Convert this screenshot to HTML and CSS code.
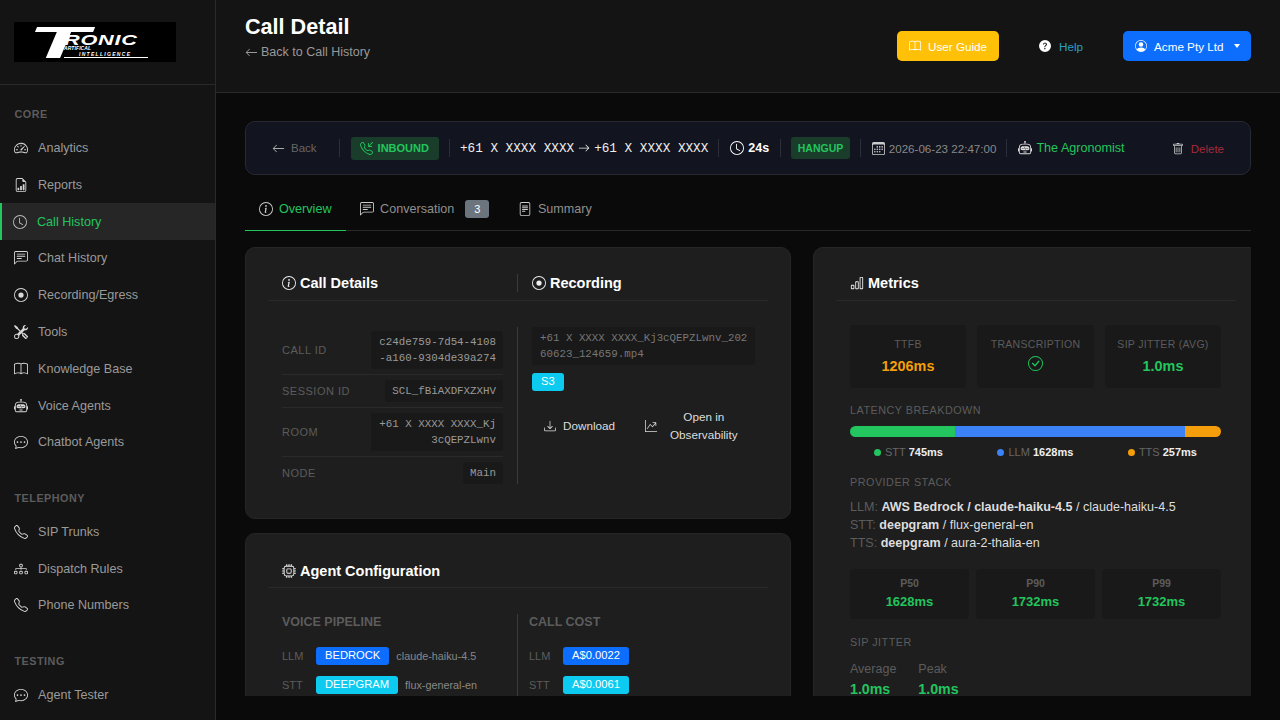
FILE: index.html
```html
<!DOCTYPE html>
<html lang="en">
<head>
    <meta charset="UTF-8">
    <meta name="viewport" content="width=device-width, initial-scale=1.0">
    <title>Call Detail</title>
    <link rel="stylesheet" href="styles.css">
</head>
<body>

    <!-- Icon sprite -->
    <svg class="sprite" xmlns="http://www.w3.org/2000/svg">
        <symbol id="i-speedometer" viewBox="0 0 16 16"><path d="M8 4a.5.5 0 0 1 .5.5V6a.5.5 0 0 1-1 0V4.5A.5.5 0 0 1 8 4zM3.732 5.732a.5.5 0 0 1 .707 0l.915.914a.5.5 0 1 1-.708.708l-.914-.915a.5.5 0 0 1 0-.707zM2 10a.5.5 0 0 1 .5-.5h1.586a.5.5 0 0 1 0 1H2.5A.5.5 0 0 1 2 10zm9.5 0a.5.5 0 0 1 .5-.5h1.5a.5.5 0 0 1 0 1H12a.5.5 0 0 1-.5-.5zm.754-4.246a.389.389 0 0 0-.527-.02L7.547 9.31a.91.91 0 1 0 1.302 1.258l3.434-4.297a.389.389 0 0 0-.029-.518z"/><path fill-rule="evenodd" d="M0 10a8 8 0 1 1 15.547 2.661c-.442 1.253-1.845 1.602-2.932 1.25C11.309 13.488 9.475 13 8 13c-1.474 0-3.31.488-4.615.911-1.087.352-2.49.003-2.932-1.25A7.988 7.988 0 0 1 0 10zm8-7a7 7 0 0 0-6.603 9.329c.203.575.923.876 1.68.63C4.397 12.533 6.358 12 8 12s3.604.532 4.923.96c.757.245 1.477-.056 1.68-.631A7 7 0 0 0 8 3z"/></symbol>
        <symbol id="i-report" viewBox="0 0 16 16"><path d="M10 13.5a.5.5 0 0 0 .5.5h1a.5.5 0 0 0 .5-.5v-6a.5.5 0 0 0-.5-.5h-1a.5.5 0 0 0-.5.5v6zm-2.5.5a.5.5 0 0 1-.5-.5v-4a.5.5 0 0 1 .5-.5h1a.5.5 0 0 1 .5.5v4a.5.5 0 0 1-.5.5h-1zm-3 0a.5.5 0 0 1-.5-.5v-2a.5.5 0 0 1 .5-.5h1a.5.5 0 0 1 .5.5v2a.5.5 0 0 1-.5.5h-1z"/><path d="M14 14V4.5L9.5 0H4a2 2 0 0 0-2 2v12a2 2 0 0 0 2 2h8a2 2 0 0 0 2-2zM9.5 3A1.5 1.5 0 0 0 11 4.5h2V14a1 1 0 0 1-1 1H4a1 1 0 0 1-1-1V2a1 1 0 0 1 1-1h5.5v2z"/></symbol>
        <symbol id="i-clock" viewBox="0 0 16 16"><path d="M8 3.5a.5.5 0 0 0-1 0V9a.5.5 0 0 0 .252.434l3.5 2a.5.5 0 0 0 .496-.868L8 8.71V3.5z"/><path d="M8 16A8 8 0 1 0 8 0a8 8 0 0 0 0 16zm7-8A7 7 0 1 1 1 8a7 7 0 0 1 14 0z"/></symbol>
        <symbol id="i-chat-text" viewBox="0 0 16 16"><path d="M14 1a1 1 0 0 1 1 1v8a1 1 0 0 1-1 1H4.414A2 2 0 0 0 3 11.586l-2 2V2a1 1 0 0 1 1-1h12zM2 0a2 2 0 0 0-2 2v12.793a.5.5 0 0 0 .854.353l2.853-2.853A1 1 0 0 1 4.414 12H14a2 2 0 0 0 2-2V2a2 2 0 0 0-2-2H2z"/><path d="M3 3.5a.5.5 0 0 1 .5-.5h9a.5.5 0 0 1 0 1h-9a.5.5 0 0 1-.5-.5zM3 6a.5.5 0 0 1 .5-.5h9a.5.5 0 0 1 0 1h-9A.5.5 0 0 1 3 6zm0 2.5a.5.5 0 0 1 .5-.5h5a.5.5 0 0 1 0 1h-5a.5.5 0 0 1-.5-.5z"/></symbol>
        <symbol id="i-record" viewBox="0 0 16 16"><path d="M8 15A7 7 0 1 1 8 1a7 7 0 0 1 0 14zm0 1A8 8 0 1 0 8 0a8 8 0 0 0 0 16z"/><path d="M11 8a3 3 0 1 1-6 0 3 3 0 0 1 6 0z"/></symbol>
        <symbol id="i-tools" viewBox="0 0 16 16"><path d="M1 0 0 1l2.2 3.081a1 1 0 0 0 .815.419h.07a1 1 0 0 1 .708.293l2.675 2.675-2.617 2.654A3.003 3.003 0 0 0 0 13a3 3 0 1 0 5.878-.851l2.654-2.617.968.968-.305.914a1 1 0 0 0 .242 1.023l3.27 3.27a.997.997 0 0 0 1.414 0l1.586-1.586a.997.997 0 0 0 0-1.414l-3.27-3.27a1 1 0 0 0-1.023-.242L10.5 9.5l-.96-.96 2.68-2.643A3.005 3.005 0 0 0 16 3c0-.269-.035-.53-.102-.777l-2.14 2.141L12 4l-.364-1.757L13.777.102a3 3 0 0 0-3.675 3.68L7.462 6.46 4.793 3.793a1 1 0 0 1-.293-.707v-.071a1 1 0 0 0-.419-.814L1 0Zm9.646 10.646a.5.5 0 0 1 .708 0l2.914 2.915a.5.5 0 0 1-.707.707l-2.915-2.914a.5.5 0 0 1 0-.708ZM3 11l.471.242.529.026.287.445.445.287.026.529L5 13l-.242.471-.026.529-.445.287-.287.445-.529.026L3 15l-.471-.242L2 14.732l-.287-.445L1.268 14l-.026-.529L1 13l.242-.471.026-.529.445-.287.287-.445.529-.026L3 11Z"/></symbol>
        <symbol id="i-book" viewBox="0 0 16 16"><path d="M1 2.828c.885-.37 2.154-.769 3.388-.893 1.33-.134 2.458.063 3.112.752v9.746c-.935-.53-2.12-.603-3.213-.493-1.18.12-2.37.461-3.287.811V2.828zm7.5-.141c.654-.689 1.782-.886 3.112-.752 1.234.124 2.503.523 3.388.893v9.923c-.918-.35-2.107-.692-3.287-.81-1.094-.111-2.278-.039-3.213.492V2.687zM8 1.783C7.015.936 5.587.81 4.287.94c-1.514.153-3.042.672-3.994 1.105A.5.5 0 0 0 0 2.5v11a.5.5 0 0 0 .707.455c.882-.4 2.303-.881 3.68-1.02 1.409-.142 2.59.087 3.223.877a.5.5 0 0 0 .78 0c.633-.79 1.814-1.019 3.222-.877 1.378.139 2.8.62 3.681 1.02A.5.5 0 0 0 16 13.5v-11a.5.5 0 0 0-.293-.455c-.952-.433-2.48-.952-3.994-1.105C10.413.809 8.985.936 8 1.783z"/></symbol>
        <symbol id="i-robot" viewBox="0 0 16 16"><path d="M6 12.5a.5.5 0 0 1 .5-.5h3a.5.5 0 0 1 0 1h-3a.5.5 0 0 1-.5-.5ZM3 8.062C3 6.76 4.235 5.765 5.53 5.886a26.58 26.58 0 0 0 4.94 0C11.765 5.765 13 6.76 13 8.062v1.157a.933.933 0 0 1-.765.935c-.845.147-2.34.346-4.235.346-1.895 0-3.39-.2-4.235-.346A.933.933 0 0 1 3 9.219V8.062Zm4.542-.827a.25.25 0 0 0-.217.068l-.92.9a24.767 24.767 0 0 1-1.871-.183.25.25 0 0 0-.068.495c.55.076 1.232.149 2.02.193a.25.25 0 0 0 .189-.071l.754-.736.847 1.71a.25.25 0 0 0 .404.062l.932-.97a25.286 25.286 0 0 0 1.922-.188.25.25 0 0 0-.068-.495c-.538.074-1.207.145-1.98.189a.25.25 0 0 0-.166.076l-.754.785-.842-1.7a.25.25 0 0 0-.182-.135Z"/><path d="M8.5 1.866a1 1 0 1 0-1 0V3h-2A4.5 4.5 0 0 0 1 7.5V8a1 1 0 0 0-1 1v2a1 1 0 0 0 1 1v1a2 2 0 0 0 2 2h10a2 2 0 0 0 2-2v-1a1 1 0 0 0 1-1V9a1 1 0 0 0-1-1v-.5A4.5 4.5 0 0 0 10.5 3h-2V1.866ZM14 7.5V13a1 1 0 0 1-1 1H3a1 1 0 0 1-1-1V7.5A3.5 3.5 0 0 1 5.5 4h5A3.5 3.5 0 0 1 14 7.5Z"/></symbol>
        <symbol id="i-chat-dots" viewBox="0 0 16 16"><path d="M5 8a1 1 0 1 1-2 0 1 1 0 0 1 2 0zm4 0a1 1 0 1 1-2 0 1 1 0 0 1 2 0zm3 1a1 1 0 1 0 0-2 1 1 0 0 0 0 2z"/><path d="M2.165 15.803l.02-.004c1.83-.363 2.948-.842 3.468-1.105A9.06 9.06 0 0 0 8 15c4.418 0 8-3.134 8-7s-3.582-7-8-7-8 3.134-8 7c0 1.76.743 3.37 1.97 4.6a10.437 10.437 0 0 1-.524 2.318l-.003.011a10.722 10.722 0 0 1-.244.637c-.079.186.074.394.273.362a21.673 21.673 0 0 0 .693-.125zm.8-3.108a1 1 0 0 0-.287-.801C1.618 10.83 1 9.468 1 8c0-3.192 3.004-6 7-6s7 2.808 7 6c0 3.193-3.004 6-7 6a8.06 8.06 0 0 1-2.088-.272 1 1 0 0 0-.711.074c-.387.196-1.24.57-2.634.893a10.97 10.97 0 0 0 .398-2z"/></symbol>
        <symbol id="i-phone" viewBox="0 0 16 16"><path d="M3.654 1.328a.678.678 0 0 0-1.015-.063L1.605 2.3c-.483.484-.661 1.169-.45 1.77a17.568 17.568 0 0 0 4.168 6.608 17.569 17.569 0 0 0 6.608 4.168c.601.211 1.286.033 1.77-.45l1.034-1.034a.678.678 0 0 0-.063-1.015l-2.307-1.794a.678.678 0 0 0-.58-.122l-2.19.547a1.745 1.745 0 0 1-1.657-.459L5.482 8.062a1.745 1.745 0 0 1-.46-1.657l.548-2.19a.678.678 0 0 0-.122-.58L3.654 1.328zM1.884.511a1.745 1.745 0 0 1 2.612.163L6.29 2.98c.329.423.445.974.315 1.494l-.547 2.19a.678.678 0 0 0 .178.643l2.457 2.457a.678.678 0 0 0 .644.178l2.189-.547a1.745 1.745 0 0 1 1.494.315l2.306 1.794c.829.645.905 1.87.163 2.611l-1.034 1.034c-.74.74-1.846 1.065-2.877.702a18.634 18.634 0 0 1-7.01-4.42 18.634 18.634 0 0 1-4.42-7.009c-.362-1.03-.037-2.137.703-2.877L1.885.511z"/></symbol>
        <symbol id="i-inbound" viewBox="0 0 16 16"><path d="M15.854.146a.5.5 0 0 1 0 .708L11.707 5H14.5a.5.5 0 0 1 0 1h-4a.5.5 0 0 1-.5-.5v-4a.5.5 0 0 1 1 0v2.793L15.146.146a.5.5 0 0 1 .708 0z"/><path d="M3.654 1.328a.678.678 0 0 0-1.015-.063L1.605 2.3c-.483.484-.661 1.169-.45 1.77a17.568 17.568 0 0 0 4.168 6.608 17.569 17.569 0 0 0 6.608 4.168c.601.211 1.286.033 1.77-.45l1.034-1.034a.678.678 0 0 0-.063-1.015l-2.307-1.794a.678.678 0 0 0-.58-.122l-2.19.547a1.745 1.745 0 0 1-1.657-.459L5.482 8.062a1.745 1.745 0 0 1-.46-1.657l.548-2.19a.678.678 0 0 0-.122-.58L3.654 1.328zM1.884.511a1.745 1.745 0 0 1 2.612.163L6.29 2.98c.329.423.445.974.315 1.494l-.547 2.19a.678.678 0 0 0 .178.643l2.457 2.457a.678.678 0 0 0 .644.178l2.189-.547a1.745 1.745 0 0 1 1.494.315l2.306 1.794c.829.645.905 1.87.163 2.611l-1.034 1.034c-.74.74-1.846 1.065-2.877.702a18.634 18.634 0 0 1-7.01-4.42 18.634 18.634 0 0 1-4.42-7.009c-.362-1.03-.037-2.137.703-2.877L1.885.511z"/></symbol>
        <symbol id="i-diagram" viewBox="0 0 16 16"><path fill-rule="evenodd" d="M6 3.5A1.5 1.5 0 0 1 7.5 2h1A1.5 1.5 0 0 1 10 3.5v1A1.5 1.5 0 0 1 8.5 6v1H14a.5.5 0 0 1 .5.5v1a.5.5 0 0 1-1 0V8h-5v.5a.5.5 0 0 1-1 0V8h-5v.5a.5.5 0 0 1-1 0v-1A.5.5 0 0 1 2 7h5.5V6A1.5 1.5 0 0 1 6 4.5v-1zM8.5 5a.5.5 0 0 0 .5-.5v-1a.5.5 0 0 0-.5-.5h-1a.5.5 0 0 0-.5.5v1a.5.5 0 0 0 .5.5h1zM0 11.5A1.5 1.5 0 0 1 1.5 10h1A1.5 1.5 0 0 1 4 11.5v1A1.5 1.5 0 0 1 2.5 14h-1A1.5 1.5 0 0 1 0 12.5v-1zm1.5-.5a.5.5 0 0 0-.5.5v1a.5.5 0 0 0 .5.5h1a.5.5 0 0 0 .5-.5v-1a.5.5 0 0 0-.5-.5h-1zm4.5.5A1.5 1.5 0 0 1 7.5 10h1a1.5 1.5 0 0 1 1.5 1.5v1A1.5 1.5 0 0 1 8.5 14h-1A1.5 1.5 0 0 1 6 12.5v-1zm1.5-.5a.5.5 0 0 0-.5.5v1a.5.5 0 0 0 .5.5h1a.5.5 0 0 0 .5-.5v-1a.5.5 0 0 0-.5-.5h-1zm4.5.5a1.5 1.5 0 0 1 1.5-1.5h1a1.5 1.5 0 0 1 1.5 1.5v1a1.5 1.5 0 0 1-1.5 1.5h-1a1.5 1.5 0 0 1-1.5-1.5v-1zm1.5-.5a.5.5 0 0 0-.5.5v1a.5.5 0 0 0 .5.5h1a.5.5 0 0 0 .5-.5v-1a.5.5 0 0 0-.5-.5h-1z"/></symbol>
        <symbol id="i-arrow-left" viewBox="0 0 16 16"><path fill-rule="evenodd" d="M15 8a.5.5 0 0 0-.5-.5H2.707l3.147-3.146a.5.5 0 1 0-.708-.708l-4 4a.5.5 0 0 0 0 .708l4 4a.5.5 0 0 0 .708-.708L2.707 8.5H14.5A.5.5 0 0 0 15 8z"/></symbol>
        <symbol id="i-arrow-right" viewBox="0 0 16 16"><path fill-rule="evenodd" d="M1 8a.5.5 0 0 1 .5-.5h11.793l-3.147-3.146a.5.5 0 0 1 .708-.708l4 4a.5.5 0 0 1 0 .708l-4 4a.5.5 0 0 1-.708-.708L13.293 8.5H1.5A.5.5 0 0 1 1 8z"/></symbol>
        <symbol id="i-info" viewBox="0 0 16 16"><path d="M8 15A7 7 0 1 1 8 1a7 7 0 0 1 0 14zm0 1A8 8 0 1 0 8 0a8 8 0 0 0 0 16z"/><path d="m8.93 6.588-2.29.287-.082.38.45.083c.294.07.352.176.288.469l-.738 3.468c-.194.897.105 1.319.808 1.319.545 0 1.178-.252 1.465-.598l.088-.416c-.2.176-.492.246-.686.246-.275 0-.375-.193-.304-.533L8.93 6.588zM9 4.5a1 1 0 1 1-2 0 1 1 0 0 1 2 0z"/></symbol>
        <symbol id="i-question" viewBox="0 0 16 16"><path d="M16 8A8 8 0 1 1 0 8a8 8 0 0 1 16 0zM5.496 6.033h.825c.138 0 .248-.113.266-.25.09-.656.54-1.134 1.342-1.134.686 0 1.314.343 1.314 1.168 0 .635-.374.927-.965 1.371-.673.489-1.206 1.06-1.168 1.987l.003.217a.25.25 0 0 0 .25.246h.811a.25.25 0 0 0 .25-.25v-.105c0-.718.273-.927 1.01-1.486.609-.463 1.244-.977 1.244-2.056 0-1.511-1.276-2.241-2.673-2.241-1.267 0-2.655.59-2.75 2.286a.237.237 0 0 0 .241.247zm2.325 6.443c.61 0 1.029-.394 1.029-.927 0-.552-.42-.94-1.029-.94-.584 0-1.009.388-1.009.94 0 .533.425.927 1.01.927z"/></symbol>
        <symbol id="i-person" viewBox="0 0 16 16"><path d="M11 6a3 3 0 1 1-6 0 3 3 0 0 1 6 0z"/><path fill-rule="evenodd" d="M0 8a8 8 0 1 1 16 0A8 8 0 0 1 0 8zm8-7a7 7 0 0 0-5.468 11.37C3.242 11.226 4.805 10 8 10s4.757 1.225 5.468 2.37A7 7 0 0 0 8 1z"/></symbol>
        <symbol id="i-calendar" viewBox="0 0 16 16"><path d="M14 0H2a2 2 0 0 0-2 2v12a2 2 0 0 0 2 2h12a2 2 0 0 0 2-2V2a2 2 0 0 0-2-2zM1 3.857C1 3.384 1.448 3 2 3h12c.552 0 1 .384 1 .857v10.286c0 .473-.448.857-1 .857H2c-.552 0-1-.384-1-.857V3.857z"/><path d="M6.5 7a1 1 0 1 0 0-2 1 1 0 0 0 0 2zm3 0a1 1 0 1 0 0-2 1 1 0 0 0 0 2zm3 0a1 1 0 1 0 0-2 1 1 0 0 0 0 2zm-9 3a1 1 0 1 0 0-2 1 1 0 0 0 0 2zm3 0a1 1 0 1 0 0-2 1 1 0 0 0 0 2zm3 0a1 1 0 1 0 0-2 1 1 0 0 0 0 2zm3 0a1 1 0 1 0 0-2 1 1 0 0 0 0 2zm-9 3a1 1 0 1 0 0-2 1 1 0 0 0 0 2zm3 0a1 1 0 1 0 0-2 1 1 0 0 0 0 2zm3 0a1 1 0 1 0 0-2 1 1 0 0 0 0 2z"/></symbol>
        <symbol id="i-trash" viewBox="0 0 16 16"><path d="M5.5 5.5A.5.5 0 0 1 6 6v6a.5.5 0 0 1-1 0V6a.5.5 0 0 1 .5-.5zm2.5 0a.5.5 0 0 1 .5.5v6a.5.5 0 0 1-1 0V6a.5.5 0 0 1 .5-.5zm3 .5a.5.5 0 0 0-1 0v6a.5.5 0 0 0 1 0V6z"/><path fill-rule="evenodd" d="M14.5 3a1 1 0 0 1-1 1H13v9a2 2 0 0 1-2 2H5a2 2 0 0 1-2-2V4h-.5a1 1 0 0 1-1-1V2a1 1 0 0 1 1-1H6a1 1 0 0 1 1-1h2a1 1 0 0 1 1 1h3.5a1 1 0 0 1 1 1v1zM4.118 4 4 4.059V13a1 1 0 0 0 1 1h6a1 1 0 0 0 1-1V4.059L11.882 4H4.118zM2.5 3V2h11v1h-11z"/></symbol>
        <symbol id="i-file-text" viewBox="0 0 16 16"><path d="M5 4a.5.5 0 0 0 0 1h6a.5.5 0 0 0 0-1H5zm-.5 2.5A.5.5 0 0 1 5 6h6a.5.5 0 0 1 0 1H5a.5.5 0 0 1-.5-.5zM5 8a.5.5 0 0 0 0 1h6a.5.5 0 0 0 0-1H5zm0 2a.5.5 0 0 0 0 1h3a.5.5 0 0 0 0-1H5z"/><path d="M2 2a2 2 0 0 1 2-2h8a2 2 0 0 1 2 2v12a2 2 0 0 1-2 2H4a2 2 0 0 1-2-2V2zm10-1H4a1 1 0 0 0-1 1v12a1 1 0 0 0 1 1h8a1 1 0 0 0 1-1V2a1 1 0 0 0-1-1z"/></symbol>
        <symbol id="i-download" viewBox="0 0 16 16"><path d="M.5 9.9a.5.5 0 0 1 .5.5v2.5a1 1 0 0 0 1 1h12a1 1 0 0 0 1-1v-2.5a.5.5 0 0 1 1 0v2.5a2 2 0 0 1-2 2H2a2 2 0 0 1-2-2v-2.5a.5.5 0 0 1 .5-.5z"/><path d="M7.646 11.854a.5.5 0 0 0 .708 0l3-3a.5.5 0 0 0-.708-.708L8.5 10.293V1.5a.5.5 0 0 0-1 0v8.793L5.354 8.146a.5.5 0 1 0-.708.708l3 3z"/></symbol>
        <symbol id="i-graph" viewBox="0 0 16 16"><path fill-rule="evenodd" d="M0 0h1v15h15v1H0V0Zm10 3.5a.5.5 0 0 1 .5-.5h4a.5.5 0 0 1 .5.5v4a.5.5 0 0 1-1 0V4.9l-3.613 4.417a.5.5 0 0 1-.74.037L7.06 6.767l-3.656 5.027a.5.5 0 0 1-.808-.588l4-5.5a.5.5 0 0 1 .758-.06l2.609 2.61L13.445 4H10.5a.5.5 0 0 1-.5-.5Z"/></symbol>
        <symbol id="i-bars" viewBox="0 0 16 16"><path d="M4 11H2v3h2v-3zm5-4H7v7h2V7zm5-5v12h-2V2h2zm-2-1a1 1 0 0 0-1 1v12a1 1 0 0 0 1 1h2a1 1 0 0 0 1-1V2a1 1 0 0 0-1-1h-2zM6 7a1 1 0 0 1 1-1h2a1 1 0 0 1 1 1v7a1 1 0 0 1-1 1H7a1 1 0 0 1-1-1V7zm-5 4a1 1 0 0 1 1-1h2a1 1 0 0 1 1 1v3a1 1 0 0 1-1 1H2a1 1 0 0 1-1-1v-3z"/></symbol>
        <symbol id="i-check" viewBox="0 0 16 16"><path d="M8 15A7 7 0 1 1 8 1a7 7 0 0 1 0 14zm0 1A8 8 0 1 0 8 0a8 8 0 0 0 0 16z"/><path d="M10.97 4.97a.235.235 0 0 0-.02.022L7.477 9.417 5.384 7.323a.75.75 0 0 0-1.06 1.06L6.97 11.03a.75.75 0 0 0 1.079-.02l3.992-4.99a.75.75 0 0 0-1.071-1.05z"/></symbol>
        <symbol id="i-cpu" viewBox="0 0 16 16"><path d="M5 0a.5.5 0 0 1 .5.5V2h1V.5a.5.5 0 0 1 1 0V2h1V.5a.5.5 0 0 1 1 0V2h1V.5a.5.5 0 0 1 1 0V2A2.5 2.5 0 0 1 14 4.5h1.5a.5.5 0 0 1 0 1H14v1h1.5a.5.5 0 0 1 0 1H14v1h1.5a.5.5 0 0 1 0 1H14v1h1.5a.5.5 0 0 1 0 1H14a2.5 2.5 0 0 1-2.5 2.5v1.5a.5.5 0 0 1-1 0V14h-1v1.5a.5.5 0 0 1-1 0V14h-1v1.5a.5.5 0 0 1-1 0V14h-1v1.5a.5.5 0 0 1-1 0V14A2.5 2.5 0 0 1 2 11.5H.5a.5.5 0 0 1 0-1H2v-1H.5a.5.5 0 0 1 0-1H2v-1H.5a.5.5 0 0 1 0-1H2v-1H.5a.5.5 0 0 1 0-1H2A2.5 2.5 0 0 1 4.5 2V.5A.5.5 0 0 1 5 0zm-.5 3A1.5 1.5 0 0 0 3 4.5v7A1.5 1.5 0 0 0 4.5 13h7a1.5 1.5 0 0 0 1.5-1.5v-7A1.5 1.5 0 0 0 11.5 3h-7zM5 6.5A1.5 1.5 0 0 1 6.5 5h3A1.5 1.5 0 0 1 11 6.5v3A1.5 1.5 0 0 1 9.5 11h-3A1.5 1.5 0 0 1 5 9.5v-3zM6.5 6a.5.5 0 0 0-.5.5v3a.5.5 0 0 0 .5.5h3a.5.5 0 0 0 .5-.5v-3a.5.5 0 0 0-.5-.5h-3z"/></symbol>
    </svg>

    <div class="app">

        <!-- Sidebar -->
        <aside class="sidebar">
            <div class="brand">
                <div class="logo">
                    <span class="logo-t">T</span>
                    <div class="logo-words">
                        <span class="logo-name">RONIC</span>
                        <span class="logo-sub">ARTIFICAL</span>
                        <span class="logo-sub logo-sub-2">INTELLIGENCE</span>
                    </div>
                </div>
            </div>
            <nav class="nav">
                <div class="nav-label">CORE</div>
                <a class="nav-item"><svg class="icon"><use href="#i-speedometer"/></svg>Analytics</a>
                <a class="nav-item"><svg class="icon"><use href="#i-report"/></svg>Reports</a>
                <a class="nav-item active"><svg class="icon"><use href="#i-clock"/></svg>Call History</a>
                <a class="nav-item"><svg class="icon"><use href="#i-chat-text"/></svg>Chat History</a>
                <a class="nav-item"><svg class="icon"><use href="#i-record"/></svg>Recording/Egress</a>
                <a class="nav-item"><svg class="icon"><use href="#i-tools"/></svg>Tools</a>
                <a class="nav-item"><svg class="icon"><use href="#i-book"/></svg>Knowledge Base</a>
                <a class="nav-item"><svg class="icon"><use href="#i-robot"/></svg>Voice Agents</a>
                <a class="nav-item"><svg class="icon"><use href="#i-chat-dots"/></svg>Chatbot Agents</a>

                <div class="nav-label">TELEPHONY</div>
                <a class="nav-item"><svg class="icon"><use href="#i-phone"/></svg>SIP Trunks</a>
                <a class="nav-item"><svg class="icon"><use href="#i-diagram"/></svg>Dispatch Rules</a>
                <a class="nav-item"><svg class="icon"><use href="#i-phone"/></svg>Phone Numbers</a>

                <div class="nav-label">TESTING</div>
                <a class="nav-item"><svg class="icon"><use href="#i-chat-dots"/></svg>Agent Tester</a>
            </nav>
        </aside>

        <div class="main">
            <!-- Top bar -->
            <header class="topbar">
                <div class="topbar-title">
                    <h1>Call Detail</h1>
                    <a class="back-link"><svg class="icon"><use href="#i-arrow-left"/></svg>Back to Call History</a>
                </div>
                <div class="topbar-actions">
                    <button class="btn btn-guide"><svg class="icon"><use href="#i-book"/></svg>User Guide</button>
                    <button class="btn btn-help"><svg class="icon"><use href="#i-question"/></svg>Help</button>
                    <button class="btn btn-account"><svg class="icon"><use href="#i-person"/></svg>Acme Pty Ltd<span class="caret"></span></button>
                </div>
            </header>

            <div class="content">
                <!-- Call summary bar -->
                <div class="callbar">
                    <a class="callbar-back"><svg class="icon"><use href="#i-arrow-left"/></svg>Back</a>
                    <span class="sep"></span>
                    <span class="tag tag-inbound"><svg class="icon"><use href="#i-inbound"/></svg>INBOUND</span>
                    <span class="sep"></span>
                    <span class="numbers"><span>+61 X XXXX XXXX</span><svg class="icon"><use href="#i-arrow-right"/></svg><span>+61 X XXXX XXXX</span></span>
                    <span class="sep"></span>
                    <span class="duration"><svg class="icon"><use href="#i-clock"/></svg>24s</span>
                    <span class="sep"></span>
                    <span class="tag tag-hangup">HANGUP</span>
                    <span class="sep"></span>
                    <span class="started"><svg class="icon"><use href="#i-calendar"/></svg>2026-06-23 22:47:00</span>
                    <span class="sep"></span>
                    <span class="agent"><svg class="icon"><use href="#i-robot"/></svg>The Agronomist</span>
                    <a class="delete"><svg class="icon"><use href="#i-trash"/></svg>Delete</a>
                </div>

                <!-- Tabs -->
                <div class="tabs">
                    <a class="tab active"><svg class="icon"><use href="#i-info"/></svg>Overview</a>
                    <a class="tab"><svg class="icon"><use href="#i-chat-text"/></svg>Conversation<span class="tab-count">3</span></a>
                    <a class="tab"><svg class="icon"><use href="#i-file-text"/></svg>Summary</a>
                </div>

                <div class="columns">
                    <div class="column">
                        <!-- Call details + recording -->
                        <section class="card">
                            <div class="card-head split">
                                <h2 class="card-title"><svg class="icon"><use href="#i-info"/></svg>Call Details</h2>
                                <h2 class="card-title"><svg class="icon"><use href="#i-record"/></svg>Recording</h2>
                            </div>
                            <div class="detail-body">
                                <div class="detail-list">
                                    <div class="detail-row">
                                        <span class="detail-key">CALL ID</span>
                                        <code class="detail-val">c24de759-7d54-4108-a160-9304de39a274</code>
                                    </div>
                                    <div class="detail-row">
                                        <span class="detail-key">SESSION ID</span>
                                        <code class="detail-val">SCL_fBiAXDFXZXHV</code>
                                    </div>
                                    <div class="detail-row">
                                        <span class="detail-key">ROOM</span>
                                        <code class="detail-val">+61 X XXXX XXXX_Kj3cQEPZLwnv</code>
                                    </div>
                                    <div class="detail-row">
                                        <span class="detail-key">NODE</span>
                                        <code class="detail-val">Main</code>
                                    </div>
                                </div>
                                <div class="recording">
                                    <code class="file-name">+61 X XXXX XXXX_Kj3cQEPZLwnv_20260623_124659.mp4</code>
                                    <span class="badge badge-cyan badge-s3">S3</span>
                                    <div class="recording-actions">
                                        <a class="rec-action rec-download"><svg class="icon"><use href="#i-download"/></svg>Download</a>
                                        <a class="rec-action rec-observe"><svg class="icon"><use href="#i-graph"/></svg><span>Open in<br>Observability</span></a>
                                    </div>
                                </div>
                            </div>
                        </section>

                        <!-- Agent configuration -->
                        <section class="card">
                            <div class="card-head head-tall">
                                <h2 class="card-title"><svg class="icon"><use href="#i-cpu"/></svg>Agent Configuration</h2>
                            </div>
                            <div class="config-body">
                                <div class="config-col">
                                    <h3 class="config-title">VOICE PIPELINE</h3>
                                    <div class="config-row"><span class="config-key">LLM</span><span class="badge badge-blue">BEDROCK</span><span class="config-model">claude-haiku-4.5</span></div>
                                    <div class="config-row"><span class="config-key">STT</span><span class="badge badge-cyan">DEEPGRAM</span><span class="config-model">flux-general-en</span></div>
                                </div>
                                <div class="config-col">
                                    <h3 class="config-title">CALL COST</h3>
                                    <div class="config-row"><span class="config-key">LLM</span><span class="badge badge-blue">A$0.0022</span></div>
                                    <div class="config-row"><span class="config-key">STT</span><span class="badge badge-cyan">A$0.0061</span></div>
                                </div>
                            </div>
                        </section>
                    </div>

                    <!-- Metrics -->
                    <section class="card card-metrics">
                        <div class="card-head">
                            <h2 class="card-title"><svg class="icon"><use href="#i-bars"/></svg>Metrics</h2>
                        </div>
                        <div class="metrics-body">
                            <div class="stats">
                                <div class="stat"><div class="stat-label">TTFB</div><div class="stat-value orange">1206ms</div></div>
                                <div class="stat"><div class="stat-label">TRANSCRIPTION</div><div class="stat-value green"><svg class="icon"><use href="#i-check"/></svg></div></div>
                                <div class="stat"><div class="stat-label">SIP JITTER (AVG)</div><div class="stat-value green">1.0ms</div></div>
                            </div>

                            <div class="section-label latency-label">LATENCY BREAKDOWN</div>
                            <div class="latency-bar">
                                <span class="seg seg-stt" style="width: 28.3%"></span>
                                <span class="seg seg-llm" style="width: 62%"></span>
                                <span class="seg seg-tts" style="width: 9.7%"></span>
                            </div>
                            <div class="legend">
                                <span><i class="dot seg-stt"></i>STT <b>745ms</b></span>
                                <span><i class="dot seg-llm"></i>LLM <b>1628ms</b></span>
                                <span><i class="dot seg-tts"></i>TTS <b>257ms</b></span>
                            </div>

                            <div class="section-label provider-label">PROVIDER STACK</div>
                            <div class="providers">
                                <div><span class="provider-key">LLM:</span> <b>AWS Bedrock / claude-haiku-4.5</b> / claude-haiku-4.5</div>
                                <div><span class="provider-key">STT:</span> <b>deepgram</b> / flux-general-en</div>
                                <div><span class="provider-key">TTS:</span> <b>deepgram</b> / aura-2-thalia-en</div>
                            </div>

                            <div class="percentiles">
                                <div class="percentile"><div class="percentile-label">P50</div><div class="percentile-value">1628ms</div></div>
                                <div class="percentile"><div class="percentile-label">P90</div><div class="percentile-value">1732ms</div></div>
                                <div class="percentile"><div class="percentile-label">P99</div><div class="percentile-value">1732ms</div></div>
                            </div>

                            <div class="section-label jitter-label">SIP JITTER</div>
                            <div class="jitter">
                                <div><div class="jitter-key">Average</div><div class="jitter-value">1.0ms</div></div>
                                <div><div class="jitter-key">Peak</div><div class="jitter-value">1.0ms</div></div>
                            </div>
                        </div>
                    </section>
                </div>
            </div>
        </div>
    </div>

</body>
</html>
```

FILE: styles.css
```css
* {
    box-sizing: border-box;
}
body {
    margin: 0;
    height: 720px;
    overflow: hidden;
    background-color: #0a0a0a;
    color: #fff;
    font-family: "Liberation Sans", Arial, sans-serif;
    font-size: 12.6px;
}
.sprite {
    display: none;
}
.icon {
    width: 14px;
    height: 14px;
    flex: none;
    fill: currentColor;
}
.app {
    display: flex;
    height: 720px;
}

/* Sidebar */
.sidebar {
    width: 216px;
    flex: none;
    background-color: #141414;
    border-right: 1px solid #2a2a2a;
    overflow: hidden;
}
.brand {
    height: 85px;
    padding: 22px 0 0 14px;
    border-bottom: 1px solid #2a2a2a;
}
.logo {
    display: flex;
    width: 162px;
    height: 40px;
    padding: 5px 0 0 14px;
    background-color: #000;
    overflow: hidden;
    font-style: italic;
    font-weight: bold;
    color: #fff;
}
.logo-t {
    display: block;
    width: 36px;
    height: 31px;
    font-size: 44px;
    line-height: 31px;
    transform: scaleX(2.24);
    transform-origin: left center;
}
.logo-words {
    display: flex;
    flex-direction: column;
    width: 84px;
    height: 31px;
    padding-top: 8px;
    border-bottom: 1px solid #fff;
}
.logo-name {
    font-size: 14px;
    line-height: 10px;
    letter-spacing: 0.5px;
    transform: scaleX(1.55);
    transform-origin: left center;
}
.logo-sub {
    font-size: 5px;
    line-height: 6px;
    letter-spacing: 0.1px;
}
.logo-sub-2 {
    padding-left: 15px;
    letter-spacing: 1.3px;
}
.nav-label {
    margin-top: 30px;
    margin-bottom: 8.6px;
    padding-left: 14.5px;
    height: 14px;
    font-size: 10.8px;
    line-height: 14px;
    font-weight: bold;
    letter-spacing: 0.5px;
    color: #5c5c5c;
}
.nav-label:first-child {
    margin-top: 22px;
}
.nav-item {
    display: flex;
    align-items: center;
    gap: 10px;
    height: 36.8px;
    padding-left: 14px;
    color: #9a9a9a;
}
.nav-item .icon {
    color: #d8d8d8;
}
.nav-item.active {
    padding-left: 11px;
    border-left: 2px solid #22c55e;
    background-color: #262626;
    color: #22c55e;
}
.nav-item.active .icon {
    color: #bbb;
}

/* Top bar */
.main {
    flex: 1;
    min-width: 0;
    display: flex;
    flex-direction: column;
    padding-bottom: 24px;
}
.topbar {
    flex: none;
    height: 93px;
    display: flex;
    justify-content: space-between;
    align-items: center;
    padding: 0 29px;
    background-color: #141414;
    border-bottom: 1px solid #2a2a2a;
}
.topbar-title {
    margin-top: -20px;
}
h1 {
    margin: 0 0 5px;
    font-size: 21.6px;
    line-height: 27px;
}
.back-link {
    display: flex;
    align-items: center;
    gap: 3px;
    font-size: 12.5px;
    color: #999;
}
.back-link .icon {
    width: 13px;
    height: 13px;
}
.topbar-actions {
    display: flex;
    align-items: center;
}
.btn {
    display: flex;
    align-items: center;
    height: 30px;
    padding: 0 12px;
    gap: 7px;
    border: none;
    border-radius: 5px;
    color: #fff;
    font-family: inherit;
    font-size: 11.7px;
    white-space: nowrap;
}
.btn .icon {
    width: 12px;
    height: 12px;
}
.btn-guide {
    width: 102px;
    background-color: #ffc107;
}
.btn-help {
    margin-left: 28px;
    background: none;
    color: #2b9fc4;
    gap: 8px;
}
.btn-help .icon {
    color: #fff;
}
.btn-account {
    margin-left: 28px;
    width: 128px;
    background-color: #0d6efd;
}
.caret {
    width: 0;
    height: 0;
    margin-left: 3px;
    border-top: 4px solid #fff;
    border-left: 3.5px solid transparent;
    border-right: 3.5px solid transparent;
}

/* Content */
.content {
    flex: 1;
    min-height: 0;
    margin: 0 29px;
    padding-top: 28px;
    overflow: hidden;
}
.callbar {
    display: flex;
    align-items: center;
    height: 54px;
    padding: 0 26px;
    background-color: #12141f;
    border: 1px solid #272935;
    border-radius: 10px;
}
.sep {
    width: 1px;
    height: 18px;
    margin: 0 10px;
    flex: none;
    background-color: #2c2e3a;
}
.callbar-back {
    display: flex;
    align-items: center;
    gap: 6px;
    margin-right: 12px;
    font-size: 11.5px;
    color: #666;
}
.callbar-back .icon {
    width: 13px;
    height: 13px;
    color: #aaa;
}
.tag {
    display: flex;
    align-items: center;
    height: 22px;
    border-radius: 3px;
    background-color: #1a3d2b;
    color: #22c55e;
    font-size: 11px;
    font-weight: bold;
}
.tag-inbound {
    gap: 5px;
    height: 23px;
    margin-top: 1px;
    margin-left: 1px;
    padding: 0 10px 1px 9px;
}
.tag-inbound .icon {
    width: 13px;
    height: 13px;
}
.tag-hangup {
    padding: 0 6.5px;
    font-size: 10.5px;
}
.numbers {
    display: flex;
    align-items: center;
    gap: 4px;
    font-family: "Liberation Mono", monospace;
    font-size: 12.7px;
    color: #eee;
}
.numbers .icon {
    width: 12px;
    height: 12px;
}
.duration {
    display: flex;
    align-items: center;
    gap: 4px;
    margin: 0 1px;
    font-size: 12.5px;
    font-weight: bold;
}
.started {
    display: flex;
    align-items: center;
    gap: 4px;
    margin-left: 1px;
    font-size: 11.6px;
    color: #888;
}
.started .icon {
    width: 13px;
    height: 13px;
    color: #ccc;
}
.agent {
    display: flex;
    align-items: center;
    gap: 4px;
    margin-left: 1px;
    font-size: 12.6px;
    color: #22c55e;
}
.agent .icon {
    color: #ddd;
}
.delete {
    display: flex;
    align-items: center;
    gap: 7px;
    margin-left: auto;
    padding-top: 2px;
    font-size: 11.5px;
    color: #a32b3b;
}
.delete .icon {
    width: 12px;
    height: 12px;
    color: #ccc;
    margin-top: -1px;
}

/* Tabs */
.tabs {
    display: flex;
    height: 44px;
    margin-top: 12px;
    border-bottom: 1px solid #2a2a2a;
}
.tab {
    display: flex;
    align-items: center;
    gap: 6px;
    height: 44px;
    padding: 0 14.6px 0 14px;
    color: #8f8f8f;
    border-bottom: 1px solid transparent;
}
.tab .icon {
    color: #ccc;
}
.tab.active {
    color: #22c55e;
    border-bottom-color: #22c55e;
}
.tab-count {
    margin-left: 5px;
    width: 24px;
    height: 18px;
    border-radius: 3px;
    background-color: #6c757d;
    color: #fff;
    font-size: 11px;
    line-height: 18px;
    text-align: center;
}

/* Cards */
.columns {
    display: grid;
    grid-template-columns: 546px 446px;
    gap: 22px;
    margin-top: 16px;
}
.column {
    display: flex;
    flex-direction: column;
    gap: 14px;
}
.card {
    background-color: #1e1e1e;
    border: 1px solid #262626;
    border-radius: 10px;
    padding: 0 22px;
}
.card-head {
    height: 53px;
    padding: 0 14px 8px;
    display: flex;
    align-items: flex-end;
    border-bottom: 1px solid #2a2a2a;
}
.card-head.head-tall {
    height: 54px;
    padding-bottom: 7px;
}
.card-head.split {
    display: grid;
    grid-template-columns: 250px 1fr;
    align-items: end;
    padding: 0 0 8px;
}
.split .card-title {
    padding-left: 14px;
}
.split .card-title:first-child {
    border-right: 1px solid #3a3a3a;
}
.card-title {
    display: flex;
    align-items: center;
    gap: 4px;
    height: 18px;
    margin: 0;
    font-size: 14.5px;
    line-height: 18px;
}
.card-title .icon {
    color: #eee;
}

/* Call details */
.detail-body {
    display: grid;
    grid-template-columns: 250px 1fr;
    margin-top: 26px;
    padding-bottom: 34px;
}
.detail-list {
    padding: 0 14px;
    border-right: 1px solid #3a3a3a;
}
.detail-row {
    display: flex;
    justify-content: space-between;
    align-items: center;
    padding: 5px 0;
    border-bottom: 1px solid #2a2a2a;
}
.detail-row:first-child {
    padding-top: 4px;
}
.detail-row:last-child {
    padding-bottom: 0;
    border-bottom: none;
}
.detail-key {
    font-size: 11px;
    letter-spacing: 0.5px;
    color: #5c5c5c;
}
.detail-val {
    max-width: 132px;
    padding: 3px 7px;
    background-color: #191919;
    border-radius: 3px;
    font-family: "Liberation Mono", monospace;
    font-size: 10.8px;
    line-height: 16px;
    color: #999;
    text-align: right;
    word-break: break-all;
}
.recording {
    padding: 0 13px 0 14px;
}
.file-name {
    display: block;
    padding: 3px 3px 3px 8px;
    background-color: #191919;
    border-radius: 3px;
    font-family: "Liberation Mono", monospace;
    font-size: 10.8px;
    line-height: 16px;
    color: #777;
    word-break: break-all;
}
.badge {
    display: inline-block;
    height: 18px;
    padding: 0 9px;
    border-radius: 3px;
    font-size: 11.2px;
    line-height: 17px;
    color: #fff;
}
.badge-blue {
    background-color: #0d6efd;
}
.badge-cyan {
    background-color: #0dcaf0;
}
.badge-s3 {
    margin-top: 8px;
}
.recording-actions {
    display: flex;
    align-items: center;
    margin-top: 17px;
    height: 36px;
}
.rec-action {
    display: flex;
    align-items: center;
    gap: 7px;
    font-size: 11.7px;
    line-height: 18px;
    color: #ddd;
}
.rec-action .icon {
    width: 12px;
    height: 12px;
}
.rec-download {
    margin-left: 12px;
}
.rec-observe {
    margin-left: 30px;
    text-align: center;
    gap: 13px;
}

/* Agent config */
.config-body {
    display: grid;
    grid-template-columns: 250px 1fr;
    margin-top: 26px;
    padding-bottom: 20px;
}
.config-col {
    padding-left: 14px;
}
.config-col:first-child {
    border-right: 1px solid #3a3a3a;
}
.config-col + .config-col {
    padding-left: 11px;
}
.config-title {
    margin: 0 0 17px;
    padding-top: 1px;
    font-size: 12.5px;
    line-height: 15px;
    font-weight: bold;
    color: #5c5c5c;
}
.config-row {
    display: flex;
    align-items: center;
    height: 18px;
    margin-bottom: 11px;
}
.config-key {
    width: 34px;
    font-size: 11px;
    color: #5c5c5c;
}
.config-model {
    margin-left: 7px;
    font-size: 10.8px;
    color: #888;
}

/* Metrics */
.metrics-body {
    margin-top: 24px;
    padding: 0 15px 0 14px;
}
.stats {
    display: grid;
    grid-template-columns: 116px 117px 116px;
    gap: 11px;
}
.stat {
    height: 63px;
    padding-top: 13px;
    background-color: #191919;
    border-radius: 4px;
    text-align: center;
}
.stat-label {
    font-size: 10.5px;
    line-height: 13px;
    letter-spacing: 0.3px;
    color: #5c5c5c;
}
.stat-value {
    margin-top: 5px;
    font-size: 14.4px;
    line-height: 20px;
    font-weight: bold;
}
.stat-value .icon {
    width: 15px;
    height: 15px;
}
.orange {
    color: #f59e0b;
}
.green {
    color: #22c55e;
}
.section-label {
    font-size: 10.8px;
    line-height: 13px;
    letter-spacing: 0.5px;
    color: #5c5c5c;
}
.latency-label {
    margin-top: 16px;
}
.latency-bar {
    display: flex;
    height: 11px;
    margin-top: 9px;
    border-radius: 6px;
    overflow: hidden;
}
.seg-stt {
    background-color: #22c55e;
}
.seg-llm {
    background-color: #3b82f6;
}
.seg-tts {
    background-color: #f59e0b;
}
.legend {
    display: flex;
    justify-content: space-between;
    margin-top: 9px;
    padding: 0 24px;
    font-size: 11px;
    line-height: 13px;
    color: #666;
}
.legend b {
    color: #eee;
}
.dot {
    display: inline-block;
    width: 7px;
    height: 7px;
    margin-right: 4px;
    border-radius: 50%;
}
.provider-label {
    margin-top: 17px;
}
.providers {
    margin-top: 9px;
    font-size: 12.55px;
    line-height: 18px;
    color: #ddd;
}
.provider-key {
    color: #5c5c5c;
}
.percentiles {
    display: grid;
    grid-template-columns: repeat(3, 119px);
    gap: 7px;
    margin-top: 17px;
}
.percentile {
    height: 50px;
    padding-top: 8px;
    background-color: #191919;
    border-radius: 4px;
    text-align: center;
}
.percentile-label {
    font-size: 10.5px;
    line-height: 13px;
    font-weight: bold;
    color: #5c5c5c;
}
.percentile-value {
    margin-top: 3px;
    font-size: 13px;
    line-height: 18px;
    font-weight: bold;
    color: #22c55e;
}
.jitter-label {
    margin-top: 17px;
}
.jitter {
    display: flex;
    gap: 22px;
    margin-top: 13px;
}
.jitter-key {
    font-size: 12.5px;
    line-height: 14px;
    color: #5c5c5c;
}
.jitter-value {
    margin-top: 4px;
    font-size: 14.2px;
    line-height: 18px;
    font-weight: bold;
    color: #22c55e;
}
```
